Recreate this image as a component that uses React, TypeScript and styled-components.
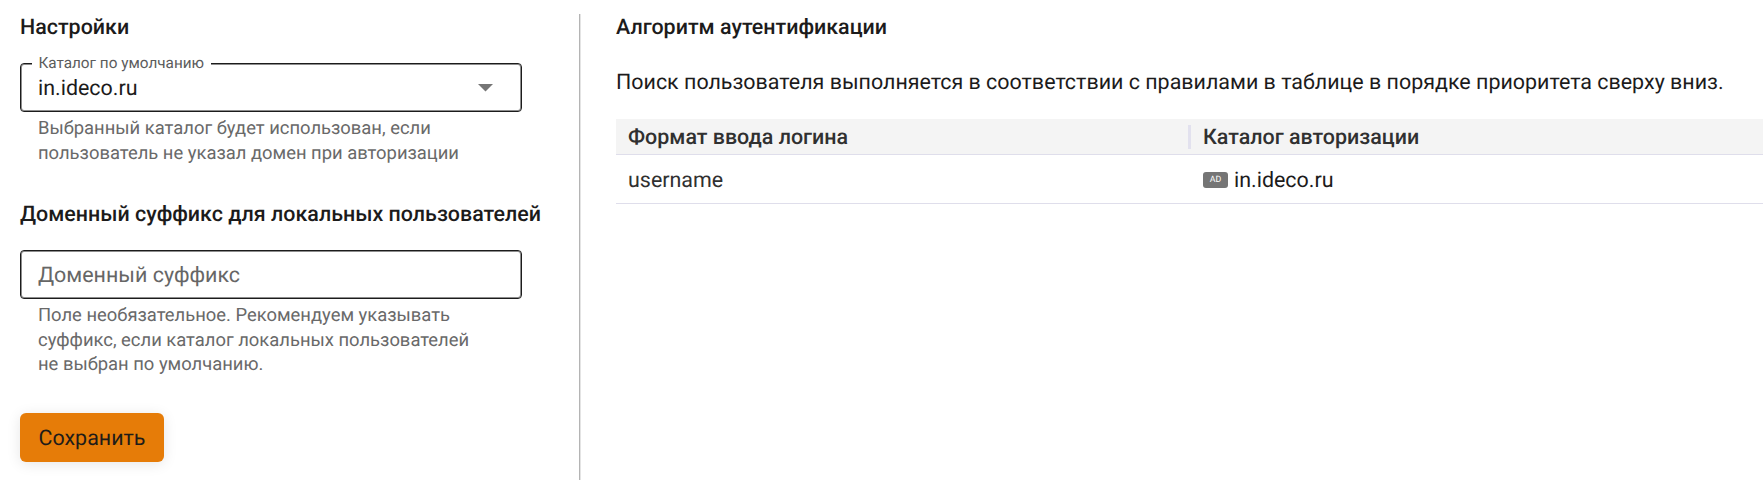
import React from 'react';
import styled, { createGlobalStyle } from 'styled-components';

const GlobalStyle = createGlobalStyle`
  * { box-sizing: border-box; }
  body {
    margin: 0;
    background: #fff;
    color: #1c1b1b;
    font-family: Roboto, sans-serif;
    font-size: 21.45px;
    line-height: 28px;
    text-rendering: geometricPrecision;
    overflow: hidden;
  }
  h2, p { margin: 0; }
`;

const Page = styled.main`
  display: flex;
  width: 100%;
  height: 480px;
  padding-top: 14px;
  overflow: hidden;
`;

const SettingsPanel = styled.section`
  flex: none;
  width: 580px;
  padding-left: 20px;
  border-right: 1px solid #b4b4b4;
  box-shadow: 1px 0 0 #e4e4e4;
`;

const RulesPanel = styled.section`
  flex: 1;
  min-width: 0;
  padding-left: 36px;
`;

const Heading = styled.h2<{ $spaced?: boolean }>`
  margin-top: ${(p) => (p.$spaced ? 35 : 0)}px;
  font-size: 21.45px;
  line-height: 28px;
  font-weight: 500;
  white-space: nowrap;
`;

const Field = styled.div`
  display: flex;
  align-items: center;
  justify-content: space-between;
  position: relative;
  width: 502px;
  height: 49px;
  margin-top: 21px;
  padding: 0 28px 0 17px;
  border: 1px solid #1c1c1c;
  border-radius: 4px;
  box-shadow: inset 0 0 0 1px rgba(28, 28, 28, 0.5);
`;

const FieldLabel = styled.span`
  position: absolute;
  top: -11px;
  left: 11px;
  padding: 0 7px 0 6.4px;
  background: #fff;
  color: #5c5c5c;
  font-size: 15.32px;
  line-height: 20px;
  white-space: nowrap;
`;

const Value = styled.span<{ $muted?: boolean }>`
  padding-top: 2px;
  color: ${(p) => (p.$muted ? '#666' : 'inherit')};
`;

const Hint = styled.p`
  padding: 5px 0 0 18px;
  color: #696969;
  font-size: 18.4px;
  line-height: 24.5px;
  white-space: nowrap;
`;

const SaveButton = styled.button`
  display: block;
  width: 144px;
  height: 49px;
  margin-top: 35.5px;
  padding: 2px 0 0;
  border: 0;
  border-radius: 6px;
  background: #e67c08;
  color: #1f1c19;
  font: 400 21.45px/28px Roboto, sans-serif;
  text-rendering: geometricPrecision;
  box-shadow: 0 2px 14px rgba(0, 0, 0, 0.1);
`;

const Intro = styled.p`
  margin-top: 27px;
  white-space: nowrap;
`;

const Table = styled.div`
  margin-top: 22px;
`;

const Row = styled.div<{ $head?: boolean }>`
  display: grid;
  grid-template-columns: 575px 1fr;
  align-items: center;
  height: ${(p) => (p.$head ? 36 : 49)}px;
  border-bottom: 1px solid #dfdeeb;
  background: ${(p) => (p.$head ? '#f4f4f4' : '#fff')};
  font-weight: ${(p) => (p.$head ? 500 : 400)};
  color: #303030;
`;

const Cell = styled.div<{ $divided?: boolean }>`
  display: flex;
  align-items: center;
  gap: 6px;
  height: 24px;
  padding: 2px 0 0 12px;
  border-right: ${(p) => (p.$divided ? '3px solid #e2e1ee' : '0')};
`;

const Badge = styled.span`
  width: 25px;
  height: 16px;
  border-radius: 3px;
  background: #757575;
  color: #fff;
  font-size: 8.8px;
  font-weight: 400;
  line-height: 16.5px;
  text-align: center;
`;

const CellText = styled.span<{ $strong?: boolean }>`
  padding-top: 2px;
  color: ${(p) => (p.$strong ? '#1c1b1b' : 'inherit')};
`;

export default function App() {
  return (
    <>
      <GlobalStyle />
      <Page>
        <SettingsPanel>
          <Heading>Настройки</Heading>
          <Field>
            <FieldLabel>Каталог по умолчанию</FieldLabel>
            <Value>in.ideco.ru</Value>
            <svg width="15" height="8" viewBox="0 0 15 8">
              <path d="M0 0h15L7.5 7.5z" fill="#757575" />
            </svg>
          </Field>
          <Hint>
            Выбранный каталог будет использован, если
            <br />
            пользователь не указал домен при авторизации
          </Hint>
          <Heading $spaced>Доменный суффикс для локальных пользователей</Heading>
          <Field>
            <Value $muted>Доменный суффикс</Value>
          </Field>
          <Hint>
            Поле необязательное. Рекомендуем указывать
            <br />
            суффикс, если каталог локальных пользователей
            <br />
            не выбран по умолчанию.
          </Hint>
          <SaveButton>Сохранить</SaveButton>
        </SettingsPanel>
        <RulesPanel>
          <Heading>Алгоритм аутентификации</Heading>
          <Intro>
            Поиск пользователя выполняется в соответствии с правилами в таблице в порядке приоритета сверху вниз.
          </Intro>
          <Table>
            <Row $head>
              <Cell $divided>Формат ввода логина</Cell>
              <Cell>Каталог авторизации</Cell>
            </Row>
            <Row>
              <Cell>
                <CellText>username</CellText>
              </Cell>
              <Cell>
                <Badge>AD</Badge>
                <CellText $strong>in.ideco.ru</CellText>
              </Cell>
            </Row>
          </Table>
        </RulesPanel>
      </Page>
    </>
  );
}
